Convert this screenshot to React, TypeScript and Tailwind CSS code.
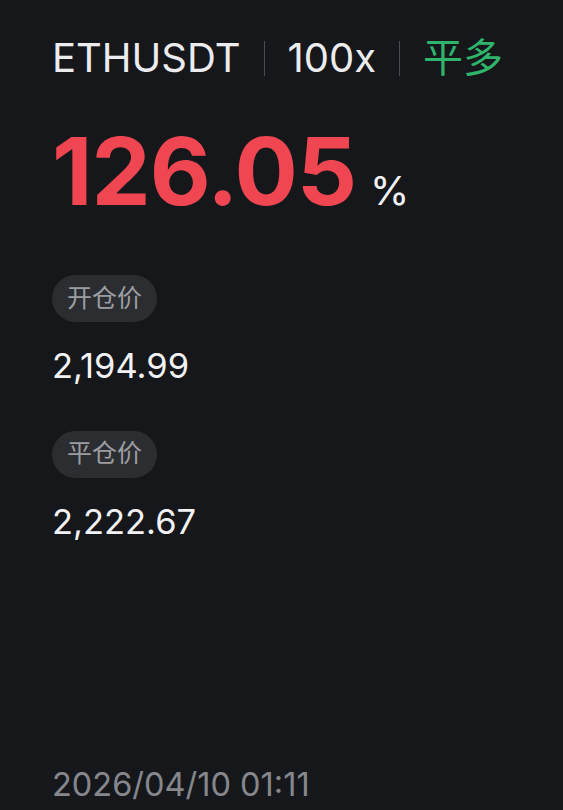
const font = { fontFamily: 'Inter, "Noto Sans CJK SC", sans-serif' };

function PriceBlock({ label, value }: { label: string; value: string }) {
  return (
    <div className="flex flex-col items-start">
      <div className="h-[47px] px-[15px] rounded-full bg-[#2c2d31] flex items-center text-[25px] text-[#9c9da1]">
        {label}
      </div>
      <div className="mt-[27px] text-[34.5px] leading-none text-[#f2f2f4]">{value}</div>
    </div>
  );
}

export default function App() {
  return (
    <div
      className="w-[563px] h-[810px] bg-[#16171b] pl-[52px] pt-[38px] flex flex-col overflow-hidden"
      style={font}
    >
      {/* header */}
      <div className="flex items-center h-[40px] text-[40px] leading-none">
        <span className="text-[#ececef]">ETHUSDT</span>
        <span className="mx-[23px] w-px h-[35px] bg-[#4a4b50]" />
        <span className="text-[#ececef]">100x</span>
        <span className="mx-[23px] w-px h-[35px] bg-[#4a4b50]" />
        <span className="text-[#2fb46c]">平多</span>
      </div>

      {/* pnl */}
      <div className="mt-[46px] flex items-baseline">
        <span className="text-[94px] font-bold leading-none text-[#ef4651] tracking-[-1px]">126.05</span>
        <span className="ml-[14px] text-[40px] leading-none text-[#f2f2f4]">%</span>
      </div>

      <div className="mt-[57px] flex flex-col gap-[47px]">
        <PriceBlock label="开仓价" value="2,194.99" />
        <PriceBlock label="平仓价" value="2,222.67" />
      </div>

      <div className="mt-auto mb-[9px] text-[32.5px] leading-none text-[#86878c]">2026/04/10 01:11</div>
    </div>
  );
}
